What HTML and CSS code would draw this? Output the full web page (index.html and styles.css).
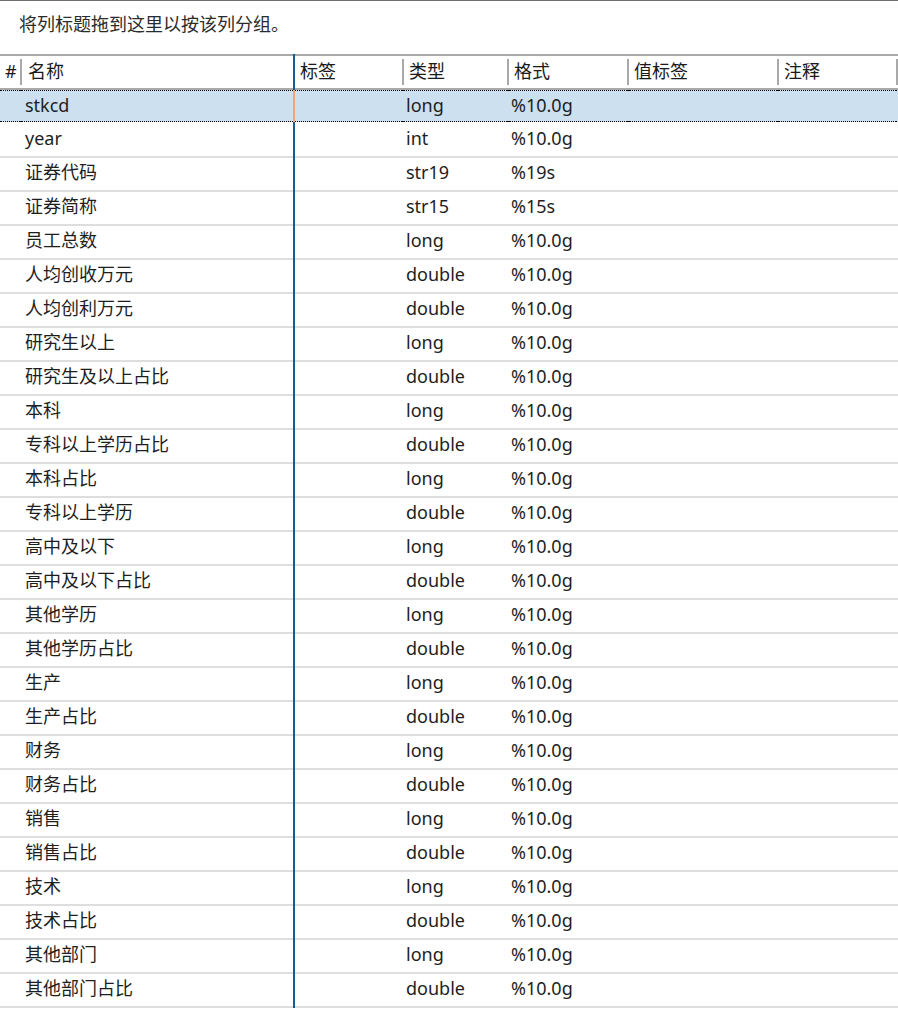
FILE: index.html
```html
<!DOCTYPE html>
<html lang="zh-CN">
<head>
<meta charset="utf-8">
<title>变量</title>
<link rel="stylesheet" href="styles.css">
</head>
<body>
<div class="group-panel">将列标题拖到这里以按该列分组。</div>
<div class="grid">
  <div class="row head">
    <div class="c c-num">#</div><div class="s"></div>
    <div class="c c-name">名称</div><div class="b"></div>
    <div class="c">标签</div><div class="s"></div>
    <div class="c">类型</div><div class="s"></div>
    <div class="c">格式</div><div class="s"></div>
    <div class="c">值标签</div><div class="s"></div>
    <div class="c">注释</div><div class="s"></div>
  </div>
  <div class="row sel"><div class="c"></div><div class="s"></div><div class="c c-name">stkcd</div><div class="b"></div><div class="c"></div><div class="s"></div><div class="c">long</div><div class="s"></div><div class="c">%10.0g</div><div class="s"></div><div class="c"></div><div class="s"></div><div class="c"></div><div class="s s-end"></div></div>
  <div class="row"><div class="c"></div><div class="s"></div><div class="c c-name">year</div><div class="b"></div><div class="c"></div><div class="s"></div><div class="c">int</div><div class="s"></div><div class="c">%10.0g</div><div class="s"></div><div class="c"></div><div class="s"></div><div class="c"></div><div class="s"></div></div>
  <div class="row"><div class="c"></div><div class="s"></div><div class="c c-name">证券代码</div><div class="b"></div><div class="c"></div><div class="s"></div><div class="c">str19</div><div class="s"></div><div class="c">%19s</div><div class="s"></div><div class="c"></div><div class="s"></div><div class="c"></div><div class="s"></div></div>
  <div class="row"><div class="c"></div><div class="s"></div><div class="c c-name">证券简称</div><div class="b"></div><div class="c"></div><div class="s"></div><div class="c">str15</div><div class="s"></div><div class="c">%15s</div><div class="s"></div><div class="c"></div><div class="s"></div><div class="c"></div><div class="s"></div></div>
  <div class="row"><div class="c"></div><div class="s"></div><div class="c c-name">员工总数</div><div class="b"></div><div class="c"></div><div class="s"></div><div class="c">long</div><div class="s"></div><div class="c">%10.0g</div><div class="s"></div><div class="c"></div><div class="s"></div><div class="c"></div><div class="s"></div></div>
  <div class="row"><div class="c"></div><div class="s"></div><div class="c c-name">人均创收万元</div><div class="b"></div><div class="c"></div><div class="s"></div><div class="c">double</div><div class="s"></div><div class="c">%10.0g</div><div class="s"></div><div class="c"></div><div class="s"></div><div class="c"></div><div class="s"></div></div>
  <div class="row"><div class="c"></div><div class="s"></div><div class="c c-name">人均创利万元</div><div class="b"></div><div class="c"></div><div class="s"></div><div class="c">double</div><div class="s"></div><div class="c">%10.0g</div><div class="s"></div><div class="c"></div><div class="s"></div><div class="c"></div><div class="s"></div></div>
  <div class="row"><div class="c"></div><div class="s"></div><div class="c c-name">研究生以上</div><div class="b"></div><div class="c"></div><div class="s"></div><div class="c">long</div><div class="s"></div><div class="c">%10.0g</div><div class="s"></div><div class="c"></div><div class="s"></div><div class="c"></div><div class="s"></div></div>
  <div class="row"><div class="c"></div><div class="s"></div><div class="c c-name">研究生及以上占比</div><div class="b"></div><div class="c"></div><div class="s"></div><div class="c">double</div><div class="s"></div><div class="c">%10.0g</div><div class="s"></div><div class="c"></div><div class="s"></div><div class="c"></div><div class="s"></div></div>
  <div class="row"><div class="c"></div><div class="s"></div><div class="c c-name">本科</div><div class="b"></div><div class="c"></div><div class="s"></div><div class="c">long</div><div class="s"></div><div class="c">%10.0g</div><div class="s"></div><div class="c"></div><div class="s"></div><div class="c"></div><div class="s"></div></div>
  <div class="row"><div class="c"></div><div class="s"></div><div class="c c-name">专科以上学历占比</div><div class="b"></div><div class="c"></div><div class="s"></div><div class="c">double</div><div class="s"></div><div class="c">%10.0g</div><div class="s"></div><div class="c"></div><div class="s"></div><div class="c"></div><div class="s"></div></div>
  <div class="row"><div class="c"></div><div class="s"></div><div class="c c-name">本科占比</div><div class="b"></div><div class="c"></div><div class="s"></div><div class="c">long</div><div class="s"></div><div class="c">%10.0g</div><div class="s"></div><div class="c"></div><div class="s"></div><div class="c"></div><div class="s"></div></div>
  <div class="row"><div class="c"></div><div class="s"></div><div class="c c-name">专科以上学历</div><div class="b"></div><div class="c"></div><div class="s"></div><div class="c">double</div><div class="s"></div><div class="c">%10.0g</div><div class="s"></div><div class="c"></div><div class="s"></div><div class="c"></div><div class="s"></div></div>
  <div class="row"><div class="c"></div><div class="s"></div><div class="c c-name">高中及以下</div><div class="b"></div><div class="c"></div><div class="s"></div><div class="c">long</div><div class="s"></div><div class="c">%10.0g</div><div class="s"></div><div class="c"></div><div class="s"></div><div class="c"></div><div class="s"></div></div>
  <div class="row"><div class="c"></div><div class="s"></div><div class="c c-name">高中及以下占比</div><div class="b"></div><div class="c"></div><div class="s"></div><div class="c">double</div><div class="s"></div><div class="c">%10.0g</div><div class="s"></div><div class="c"></div><div class="s"></div><div class="c"></div><div class="s"></div></div>
  <div class="row"><div class="c"></div><div class="s"></div><div class="c c-name">其他学历</div><div class="b"></div><div class="c"></div><div class="s"></div><div class="c">long</div><div class="s"></div><div class="c">%10.0g</div><div class="s"></div><div class="c"></div><div class="s"></div><div class="c"></div><div class="s"></div></div>
  <div class="row"><div class="c"></div><div class="s"></div><div class="c c-name">其他学历占比</div><div class="b"></div><div class="c"></div><div class="s"></div><div class="c">double</div><div class="s"></div><div class="c">%10.0g</div><div class="s"></div><div class="c"></div><div class="s"></div><div class="c"></div><div class="s"></div></div>
  <div class="row"><div class="c"></div><div class="s"></div><div class="c c-name">生产</div><div class="b"></div><div class="c"></div><div class="s"></div><div class="c">long</div><div class="s"></div><div class="c">%10.0g</div><div class="s"></div><div class="c"></div><div class="s"></div><div class="c"></div><div class="s"></div></div>
  <div class="row"><div class="c"></div><div class="s"></div><div class="c c-name">生产占比</div><div class="b"></div><div class="c"></div><div class="s"></div><div class="c">double</div><div class="s"></div><div class="c">%10.0g</div><div class="s"></div><div class="c"></div><div class="s"></div><div class="c"></div><div class="s"></div></div>
  <div class="row"><div class="c"></div><div class="s"></div><div class="c c-name">财务</div><div class="b"></div><div class="c"></div><div class="s"></div><div class="c">long</div><div class="s"></div><div class="c">%10.0g</div><div class="s"></div><div class="c"></div><div class="s"></div><div class="c"></div><div class="s"></div></div>
  <div class="row"><div class="c"></div><div class="s"></div><div class="c c-name">财务占比</div><div class="b"></div><div class="c"></div><div class="s"></div><div class="c">double</div><div class="s"></div><div class="c">%10.0g</div><div class="s"></div><div class="c"></div><div class="s"></div><div class="c"></div><div class="s"></div></div>
  <div class="row"><div class="c"></div><div class="s"></div><div class="c c-name">销售</div><div class="b"></div><div class="c"></div><div class="s"></div><div class="c">long</div><div class="s"></div><div class="c">%10.0g</div><div class="s"></div><div class="c"></div><div class="s"></div><div class="c"></div><div class="s"></div></div>
  <div class="row"><div class="c"></div><div class="s"></div><div class="c c-name">销售占比</div><div class="b"></div><div class="c"></div><div class="s"></div><div class="c">double</div><div class="s"></div><div class="c">%10.0g</div><div class="s"></div><div class="c"></div><div class="s"></div><div class="c"></div><div class="s"></div></div>
  <div class="row"><div class="c"></div><div class="s"></div><div class="c c-name">技术</div><div class="b"></div><div class="c"></div><div class="s"></div><div class="c">long</div><div class="s"></div><div class="c">%10.0g</div><div class="s"></div><div class="c"></div><div class="s"></div><div class="c"></div><div class="s"></div></div>
  <div class="row"><div class="c"></div><div class="s"></div><div class="c c-name">技术占比</div><div class="b"></div><div class="c"></div><div class="s"></div><div class="c">double</div><div class="s"></div><div class="c">%10.0g</div><div class="s"></div><div class="c"></div><div class="s"></div><div class="c"></div><div class="s"></div></div>
  <div class="row"><div class="c"></div><div class="s"></div><div class="c c-name">其他部门</div><div class="b"></div><div class="c"></div><div class="s"></div><div class="c">long</div><div class="s"></div><div class="c">%10.0g</div><div class="s"></div><div class="c"></div><div class="s"></div><div class="c"></div><div class="s"></div></div>
  <div class="row"><div class="c"></div><div class="s"></div><div class="c c-name">其他部门占比</div><div class="b"></div><div class="c"></div><div class="s"></div><div class="c">double</div><div class="s"></div><div class="c">%10.0g</div><div class="s"></div><div class="c"></div><div class="s"></div><div class="c"></div><div class="s"></div></div>
</div>
</body>
</html>
```

FILE: styles.css
```css
* { box-sizing: border-box; }
html, body {
  margin: 0;
  padding: 0;
  background: #ffffff;
  overflow: hidden;
}
body {
  width: 898px;
  height: 1010px;
  font-family: "Noto Sans", "Noto Sans CJK SC", sans-serif;
  font-size: 18px;
  color: #1e1e1e;
}
.group-panel {
  height: 54px;
  border-top: 1px solid #6e6e6e;
  padding: 10px 0 0 19px;
  line-height: 26px;
  color: #2b2b2b;
}
.grid {
  display: flex;
  flex-direction: column;
}
.row {
  display: grid;
  grid-template-columns: 20px 2px 271px 2px 107px 2px 103px 2px 118px 2px 148px 2px 117px 2px;
  height: 34px;
}
.row .c,
.row .s {
  height: 34px;
  border-bottom: 2px solid #dedede;
  display: flex;
  align-items: center;
  padding: 0 0 5px 2px;
  white-space: nowrap;
  line-height: 24px;
}
.row .c-name { padding-left: 3px; }
.row .b { background: #1d5a8c; height: 34px; }

/* header */
.head { height: 36px; }
.head .c,
.head .s {
  height: 36px;
  border-top: 2px solid #a9a9a9;
  border-bottom: 2px solid #a9a9a9;
  padding: 0 0 2px 5px;
  color: #1a1a1a;
}
.head .c-num { padding-left: 5px; }
.head .c-name { padding-left: 6px; }
.head .s {
  padding: 0;
  background: linear-gradient(#a9a9a9, #a9a9a9) center / 2px 26px no-repeat;
}
.head .b { height: 36px; }

/* selected row */
.sel .c,
.sel .s {
  height: 32px;
  align-self: start;
  background: #cde0f0;
  border-top: 1px dotted #000;
  border-bottom: 1px dotted #000;
  padding-bottom: 3px;
}
.sel .s-end {
  border-right: 1px dotted #000;
}
.sel .b {
  background: linear-gradient(to bottom, #f2a67c 0 32px, #1d5a8c 32px);
}
```
